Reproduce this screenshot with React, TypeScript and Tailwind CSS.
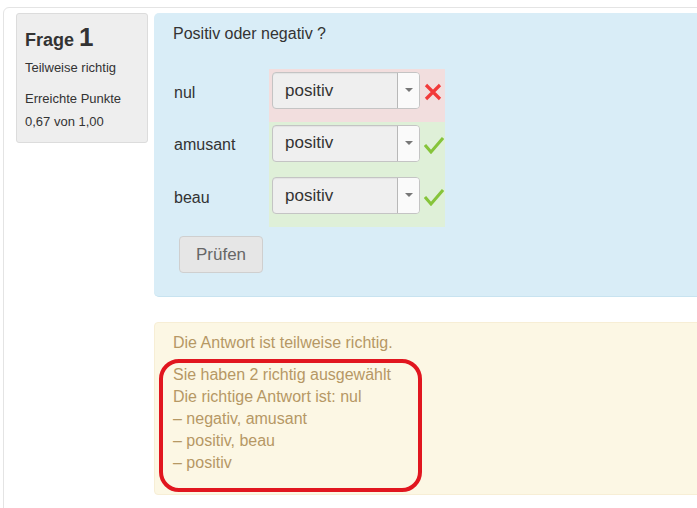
import React from "react";

const font = { fontFamily: '"Liberation Sans", Arial, sans-serif' };

interface Row {
  word: string;
  ok: boolean;
}

const rows: Row[] = [
  { word: "nul", ok: false },
  { word: "amusant", ok: true },
  { word: "beau", ok: true },
];

const Select: React.FC = () => (
  <div className="flex h-[37px] w-[148px] overflow-hidden rounded-[4px] border border-[#c4c4c4] bg-[#efefef] shadow-[inset_0_1px_1px_rgba(0,0,0,0.05)]">
    <div className="flex flex-1 items-center pl-[12px] text-[17px] text-[#333]">positiv</div>
    <div className="flex w-[22px] items-center justify-center border-l border-[#b8b8b8] bg-[#fafafa]">
      <svg width="8" height="5" viewBox="0 0 8 5">
        <path d="M0 0 L8 0 L4 4 Z" fill="#777" />
      </svg>
    </div>
  </div>
);

const Cross = () => (
  <svg width="18" height="18" viewBox="0 0 18 18">
    <path d="M2 2 L16 16 M16 2 L2 16" stroke="#f23a3a" strokeWidth="3.2" strokeLinecap="butt" />
  </svg>
);

const Check = () => (
  <svg width="20" height="18" viewBox="0 0 20 18">
    <path d="M1 9 L7 16 L19 2" stroke="#86c43a" strokeWidth="3" fill="none" strokeLinejoin="miter" />
  </svg>
);

export default function App() {
  return (
    <div className="h-[508px] w-[697px] overflow-hidden bg-white" style={font}>
      <div className="ml-[3px] mt-[7px] h-[540px] w-[760px] rounded-tl-[6px] border border-[#e4e4e4] pl-[12px] pt-[5px]">
        <div className="flex gap-[6px]">
          <div className="h-[130px] w-[132px] shrink-0 rounded-[3px] border border-[#dcdcdc] bg-[#eeeeee] px-[8px] pt-[10px] text-[#333]">
            <div className="flex items-baseline font-bold">
              <span className="text-[18px]">Frage</span>
              <span className="ml-[5px] text-[26px] leading-none">1</span>
            </div>
            <div className="mt-[5px] text-[13px] leading-[18px]">Teilweise richtig</div>
            <div className="mt-[13px] text-[13px] leading-[18px]">Erreichte Punkte</div>
            <div className="mt-[5px] text-[13px] leading-[18px]">0,67 von 1,00</div>
          </div>

          <div className="flex-1">
            <div className="h-[284px] rounded-[5px] border-b border-[#c8e3f0] bg-[#d9edf7] pl-[19px] pt-[11px]">
              <div className="text-[16px] leading-[20px] text-[#333]">Positiv oder negativ ?</div>
              <div className="mt-[25px] flex">
                <div className="w-[96px] pl-[1px] text-[16px] text-[#333]">
                  {rows.map((r) => (
                    <div key={r.word} className="flex h-[52.6px] items-center pb-[5px]">
                      {r.word}
                    </div>
                  ))}
                </div>
                <div className="w-[176px]">
                  {rows.map((r) => (
                    <div
                      key={r.word}
                      className={`flex h-[52.6px] items-start gap-[4px] pl-[3px] pt-[3px] ${r.ok ? "bg-[#dff0d8]" : "bg-[#f2dede]"}`}
                    >
                      <Select />
                      <div className="mt-[11px]">{r.ok ? <Check /> : <Cross />}</div>
                    </div>
                  ))}
                </div>
              </div>
              <button className="ml-[6px] mt-[9px] h-[37px] w-[84px] rounded-[4px] border border-[#cfcfcf] bg-[#e6e6e6] text-[17px] text-[#666]">
                Prüfen
              </button>
            </div>

            <div className="relative mt-[25px] h-[173px] rounded-[4px] border border-[#f7eed5] bg-[#fcf7e4] pl-[18px] pt-[9px] text-[16px] leading-[22px] text-[#b69864]">
              <div>Die Antwort ist teilweise richtig.</div>
              <div className="mt-[10px]">
                <div>Sie haben 2 richtig ausgewählt</div>
                <div>Die richtige Antwort ist: nul</div>
                <div>– negativ, amusant</div>
                <div>– positiv, beau</div>
                <div>– positiv</div>
              </div>
              <div className="absolute left-[4px] top-[36px] h-[133px] w-[263px] rounded-[20px] border-[4px] border-[#e1161f]" />
            </div>
          </div>
        </div>
      </div>
    </div>
  );
}
